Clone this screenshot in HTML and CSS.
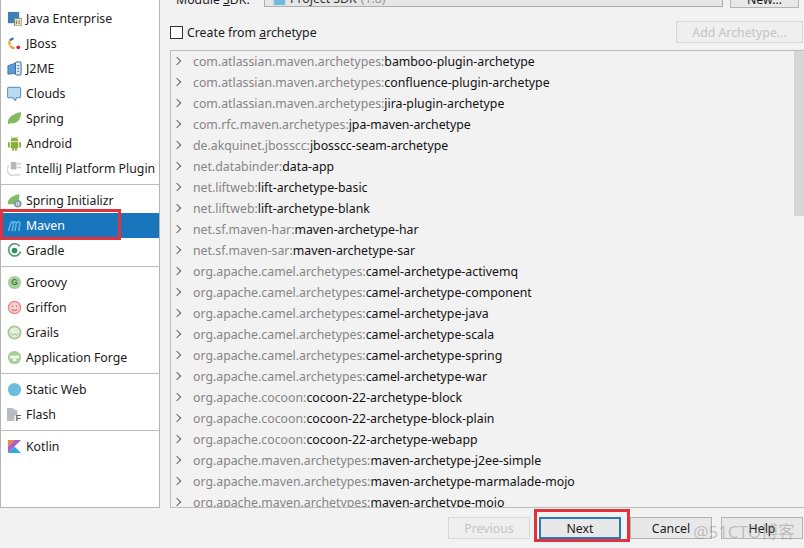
FILE: index.html
```html
<!DOCTYPE html>
<html lang="en">
<head>
<meta charset="utf-8">
<title>New Project</title>
<link rel="stylesheet" href="styles.css">
</head>
<body>
<div class="dialog">
  <div class="body">
    <aside class="sidebar">
      <div class="group">
        <div class="item"><svg class="ico" viewBox="0 0 16 16"><rect x="1" y="1" width="12" height="12" fill="#3f7fb5"/><rect x="8" y="8" width="8" height="8" fill="#e8e4c8" stroke="#8a8a70"/><path d="M10 10v4M13 10v4" stroke="#6a6a50"/></svg><span>Java Enterprise</span></div>
        <div class="item"><svg class="ico" viewBox="0 0 16 16"><path d="M7 2.500A6 6 0 0 0 3 5" stroke="#3b6fc0" stroke-width="2.500" fill="none"/><path d="M3 5A6 6 0 0 0 3 10" stroke="#e8b020" stroke-width="2.500" fill="none"/><path d="M3.500 10.500A6 6 0 0 0 8 13" stroke="#e8a040" stroke-width="2.500" fill="none"/><circle cx="12" cy="12" r="2" fill="#d8203c"/></svg><span>JBoss</span></div>
        <div class="item"><svg class="ico" viewBox="0 0 16 16"><path d="M1 5l9-3v11l-9 1z" fill="#5b9bd5" stroke="#3d78a8"/><rect x="9" y="1" width="6" height="14" rx="1" fill="#dfeaf4" stroke="#33658f"/><path d="M11 5h2M11 8h2M11 11h2" stroke="#33658f"/></svg><span>J2ME</span></div>
        <div class="item"><svg class="ico" viewBox="0 0 16 16"><path d="M2 1.500h11a1.500 1.500 0 0 1 1.500 1.500v8a1.500 1.500 0 0 1-1.500 1.500h-3l-1 3-3-3H2A1.500 1.500 0 0 1 .5 11V3A1.500 1.500 0 0 1 2 1.500z" fill="#b9dcf0" stroke="#6a9cc0" stroke-width="1.300"/></svg><span>Clouds</span></div>
        <div class="item"><svg class="ico" viewBox="0 0 16 16"><path d="M1 14C0 7 6 3 15 1c0 8-4 13-11 12z" fill="#82bb62"/></svg><span>Spring</span></div>
        <div class="item"><svg class="ico" viewBox="0 0 16 16"><path d="M4 5.500a4 4 0 0 1 8 0z" fill="#8cad3c"/><path d="M5.500 2L4.500 .5M10.500 2l1-1.500" stroke="#8cad3c"/><rect x="4" y="6.500" width="8" height="6.500" fill="#8cad3c"/><rect x="1" y="6.500" width="2" height="6" rx="1" fill="#8cad3c"/><rect x="13" y="6.500" width="2" height="6" rx="1" fill="#8cad3c"/><rect x="5.500" y="12" width="2" height="4" rx="1" fill="#8cad3c"/><rect x="8.500" y="12" width="2" height="4" rx="1" fill="#8cad3c"/></svg><span>Android</span></div>
        <div class="item"><svg class="ico" viewBox="0 0 16 16"><path d="M2 5a6 6 0 0 0 6 10h6" fill="none" stroke="#d4d4d4" stroke-width="1.500"/><rect x="4" y="1" width="6" height="8" rx="1" fill="#b8b8b8"/><path d="M10 3h5M10 7h5" stroke="#d0d0d0" stroke-width="1.500"/></svg><span>IntelliJ Platform Plugin</span></div>
      </div>
      <div class="group">
        <div class="item"><svg class="ico" viewBox="0 0 16 16"><path d="M1 12C0 7 5 3 13 1c1 7-3 12-9 11z" fill="#82bb62"/><circle cx="11.500" cy="11.500" r="4" fill="#7f97a8"/><path d="M10.500 9.500v4M12.500 9.500v4" stroke="#fff"/></svg><span>Spring Initializr</span></div>
        <div class="item selected"><svg class="ico" viewBox="0 0 16 16"><path d="M1.500 14L4 5.500c1-2 3-2 3 0L5.500 14M6 6c1.500-2.500 4-2.500 3.800 0L8.500 14M10 6c1.500-2.500 4-2.500 3.800 0L12.500 14" fill="none" stroke="#5fb8e8" stroke-width="1.600"/></svg><span>Maven</span></div>
        <div class="item"><svg class="ico" viewBox="0 0 16 16"><path d="M13.500 3.500A6.500 6.500 0 1 0 14.500 9" fill="none" stroke="#5a9a7a" stroke-width="1.800"/><circle cx="8" cy="8" r="3" fill="#2f8f5f"/></svg><span>Gradle</span></div>
      </div>
      <div class="group">
        <div class="item"><svg class="ico" viewBox="0 0 16 16"><circle cx="8" cy="8" r="7" fill="#a8cfa0"/><text class="glyph" x="8" y="11">G</text></svg><span>Groovy</span></div>
        <div class="item"><svg class="ico" viewBox="0 0 16 16"><circle cx="8" cy="8" r="6.500" fill="#f6d0d0" stroke="#e88888" stroke-width="1.500"/><path d="M5 6.500h1.500M9.500 6.500H11M5 10c2 1.500 4 1.500 6 0" stroke="#d84a4a" fill="none"/></svg><span>Griffon</span></div>
        <div class="item"><svg class="ico" viewBox="0 0 16 16"><circle cx="8" cy="8" r="6.500" fill="#e4eedc" stroke="#a8c898" stroke-width="2"/><path d="M4 9l2 2 2-2 2 2 2-2" stroke="#8fb880" fill="none"/></svg><span>Grails</span></div>
        <div class="item"><svg class="ico" viewBox="0 0 16 16"><circle cx="8" cy="8" r="7" fill="#a8cc98"/><rect x="3" y="6" width="10" height="3" fill="#f0f6ec"/><rect x="6" y="9" width="4" height="3" fill="#f0f6ec"/></svg><span>Application Forge</span></div>
      </div>
      <div class="group">
        <div class="item"><svg class="ico" viewBox="0 0 16 16"><circle cx="8" cy="8" r="7" fill="#6cbce0"/></svg><span>Static Web</span></div>
        <div class="item"><svg class="ico" viewBox="0 0 16 16"><path d="M0 1h6l2 2h3v6H8v6H0z" fill="#b8bcc0"/><text class="glyph flash" x="12" y="15">F</text></svg><span>Flash</span></div>
      </div>
      <div class="group">
        <div class="item"><svg class="ico" viewBox="0 0 16 16"><path d="M1 1h7L1 8z" fill="#e88a3a"/><path d="M8 1h7L1 15V8z" fill="#b05ec0"/><path d="M8 8l7 7H1z" fill="#30a8e0"/></svg><span>Kotlin</span></div>
      </div>
    </aside>
    <main class="main">
      <div class="sdk-row">
        <div class="sdk-label"><span>Module <u>S</u>DK:</span></div>
        <div class="combo"><svg class="ico-small" viewBox="0 0 16 16"><rect x="1" y="2" width="14" height="14" fill="#6cbce0"/></svg><span>Project SDK</span> <span class="muted">(1.8)</span></div>
        <button class="btn new-btn" type="button">New...</button>
      </div>
      <div class="arch-row">
        <label class="check"><span class="box"></span><span>Create from <u>a</u>rchetype</span></label>
        <button class="btn add-btn" type="button" disabled>Add Archetype...</button>
      </div>
      <div class="list">
        <div class="thumb"></div>
        <div class="row"><i class="chev"></i><span class="g">com.atlassian.maven.archetypes:</span>bamboo-plugin-archetype</div>
        <div class="row"><i class="chev"></i><span class="g">com.atlassian.maven.archetypes:</span>confluence-plugin-archetype</div>
        <div class="row"><i class="chev"></i><span class="g">com.atlassian.maven.archetypes:</span>jira-plugin-archetype</div>
        <div class="row"><i class="chev"></i><span class="g">com.rfc.maven.archetypes:</span>jpa-maven-archetype</div>
        <div class="row"><i class="chev"></i><span class="g">de.akquinet.jbosscc:</span>jbosscc-seam-archetype</div>
        <div class="row"><i class="chev"></i><span class="g">net.databinder:</span>data-app</div>
        <div class="row"><i class="chev"></i><span class="g">net.liftweb:</span>lift-archetype-basic</div>
        <div class="row"><i class="chev"></i><span class="g">net.liftweb:</span>lift-archetype-blank</div>
        <div class="row"><i class="chev"></i><span class="g">net.sf.maven-har:</span>maven-archetype-har</div>
        <div class="row"><i class="chev"></i><span class="g">net.sf.maven-sar:</span>maven-archetype-sar</div>
        <div class="row"><i class="chev"></i><span class="g">org.apache.camel.archetypes:</span>camel-archetype-activemq</div>
        <div class="row"><i class="chev"></i><span class="g">org.apache.camel.archetypes:</span>camel-archetype-component</div>
        <div class="row"><i class="chev"></i><span class="g">org.apache.camel.archetypes:</span>camel-archetype-java</div>
        <div class="row"><i class="chev"></i><span class="g">org.apache.camel.archetypes:</span>camel-archetype-scala</div>
        <div class="row"><i class="chev"></i><span class="g">org.apache.camel.archetypes:</span>camel-archetype-spring</div>
        <div class="row"><i class="chev"></i><span class="g">org.apache.camel.archetypes:</span>camel-archetype-war</div>
        <div class="row"><i class="chev"></i><span class="g">org.apache.cocoon:</span>cocoon-22-archetype-block</div>
        <div class="row"><i class="chev"></i><span class="g">org.apache.cocoon:</span>cocoon-22-archetype-block-plain</div>
        <div class="row"><i class="chev"></i><span class="g">org.apache.cocoon:</span>cocoon-22-archetype-webapp</div>
        <div class="row"><i class="chev"></i><span class="g">org.apache.maven.archetypes:</span>maven-archetype-j2ee-simple</div>
        <div class="row"><i class="chev"></i><span class="g">org.apache.maven.archetypes:</span>maven-archetype-marmalade-mojo</div>
        <div class="row"><i class="chev"></i><span class="g">org.apache.maven.archetypes:</span>maven-archetype-mojo</div>
      </div>
    </main>
  </div>
  <footer class="footer">
    <button class="btn foot-btn" type="button" disabled>Previous</button>
    <button class="btn foot-btn next" type="button">Next</button>
    <button class="btn foot-btn" type="button">Cancel</button>
    <button class="btn foot-btn" type="button">Help</button>
  </footer>
  <div class="mark mark-maven"></div>
  <div class="mark mark-next"></div>
  <div class="watermark">@51CTO博客</div>
</div>
</body>
</html>
```
FILE: styles.css
```css
* { box-sizing: border-box; }
html, body { margin: 0; height: 100%; overflow: hidden; }
body { background: #f2f2f2; font-family: "Noto Sans", "Noto Sans CJK SC", sans-serif; font-size: 12.3px; color: #1a1a1a; }
.dialog { position: relative; width: 804px; height: 548px; overflow: hidden; display: flex; flex-direction: column; }
.body { display: flex; height: 508px; flex: none; }
.sidebar { width: 160px; flex: none; background: #fff; border: 1px solid #b4b4b4; border-top: 0; padding-top: 6px; }
.group { padding: 3px 0; border-bottom: 1px solid #bdbdbd; }
.group:first-child { padding-top: 0; }
.group:last-child { border-bottom: 0; }
.item { height: 25px; display: flex; align-items: center; gap: 4px; padding-left: 6px; white-space: nowrap; }
.item.selected { background: #1a76bc; color: #fff; }
.ico { width: 15px; height: 15px; flex: none; }
.glyph { font-family: "Liberation Sans", sans-serif; font-size: 9px; font-weight: 700; text-anchor: middle; fill: #3f7f3a; }
.glyph.flash { font-size: 10px; fill: #666; }
.main { flex: 1; min-width: 0; padding-left: 10px; display: flex; flex-direction: column; }
.sdk-row { height: 8px; display: flex; align-items: flex-end; position: relative; }
.sdk-label { padding-left: 6px; width: 94px; flex: none; line-height: 17px; height: 8px; display: flex; align-items: flex-end; }
.combo { width: 459px; height: 17px; flex: none; background: #e6e6e6; border: 1px solid #adadad; display: flex; align-items: center; gap: 4px; padding-left: 8px; color: #333; margin-bottom: 1px; }
.ico-small { width: 13px; height: 13px; }
.muted { color: #999; }
.new-btn { width: 69px; height: 18px; margin-left: 7px; flex: none; }
.btn { font: inherit; color: #1a1a1a; background: #e8e8e8; border: 1px solid #b4b4b4; padding: 0; }
.btn:disabled { color: #c4c4c4; background: #efefef; border-color: #d8d8d8; }
.arch-row { height: 42px; display: flex; align-items: center; justify-content: space-between; padding-top: 6px; flex: none; }
.check { display: flex; align-items: center; gap: 4px; }
.box { width: 13px; height: 13px; background: #fff; border: 1px solid #333; }
.add-btn { width: 127px; height: 22px; margin-right: 1px; }
.list { position: relative; flex: 1; min-height: 0; overflow: hidden; border: solid #bcbcbc; border-width: 1px 0 1px 1px; }
.thumb { position: absolute; top: 0; right: 0; width: 10px; height: 165px; background: #d6d6d6; }
.row { height: 21px; display: flex; align-items: center; padding-left: 22px; position: relative; white-space: pre; color: #111; }
.g { color: #858585; }
.chev { position: absolute; left: 3px; top: 7px; width: 6px; height: 6px; border: solid #666; border-width: 1.5px 1.5px 0 0; transform: rotate(45deg); }
.footer { flex: 1; display: flex; gap: 9px; padding: 9px 0 0 448px; }
.foot-btn { width: 82px; height: 22px; flex: none; }
.next { border: 2px solid #2c78b8; }
.mark { position: absolute; border: 3px solid #e0333c; pointer-events: none; }
.mark-maven { left: 0; top: 209px; width: 121px; height: 31px; }
.mark-next { left: 534px; top: 509px; width: 96px; height: 33px; }
.watermark { position: absolute; right: 9px; top: 518px; font-size: 17px; color: rgba(120,120,120,.4); }
```
